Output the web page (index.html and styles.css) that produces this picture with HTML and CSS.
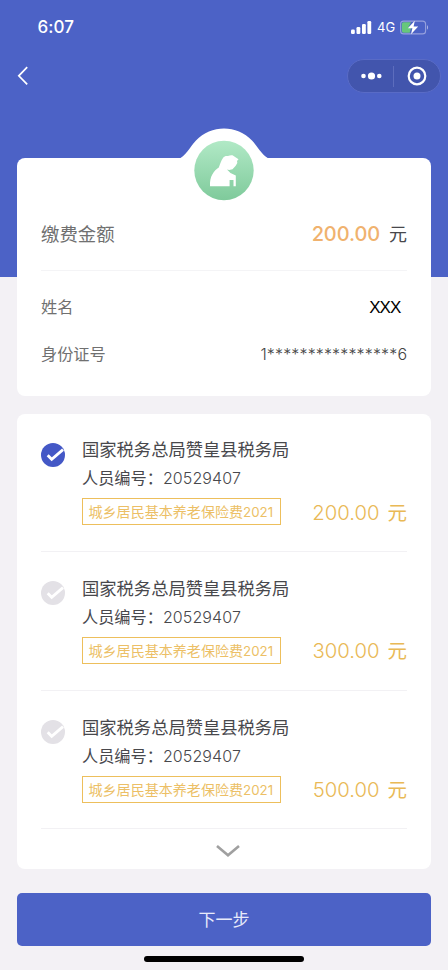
FILE: index.html
```html
<!DOCTYPE html>
<html lang="zh-CN">
<head>
<meta charset="utf-8">
<title>缴费</title>
<link rel="stylesheet" href="styles.css">
</head>
<body>
<div class="screen">
  <header class="hero">
    <div class="status">
      <span class="time">6:07</span>
      <div class="signals">
        <svg class="bars" width="21" height="13" viewBox="0 0 21 13" fill="#fff"><rect x="0" y="8.5" width="3.8" height="4.5" rx="1.2"/><rect x="5.5" y="6" width="3.8" height="7" rx="1.2"/><rect x="11" y="3" width="3.8" height="10" rx="1.2"/><rect x="16.4" y="0" width="3.8" height="13" rx="1.2"/></svg>
        <span class="network">4G</span>
        <svg class="battery" width="29" height="15" viewBox="0 0 29 15"><rect x=".6" y="1.1" width="25" height="12.8" rx="3" fill="none" stroke="#96a0dd" stroke-width="1.1"/><path d="M3.6 2.3H11L8 8h3l-1.3 4.8H3.6a1.8 1.8 0 0 1-1.8-1.8V4.1a1.8 1.8 0 0 1 1.8-1.8z" fill="#67c77b"/><path d="M27 5.3c1.4.5 1.4 3.9 0 4.4z" fill="#a9b1e3"/><path d="M14.8.8 7.8 8.2h4.6L11 14.2l7.2-7.6h-4.6z" fill="#fff"/></svg>
      </div>
    </div>
    <nav class="nav">
      <svg width="12" height="20" viewBox="0 0 12 20" fill="none" stroke="#fff" stroke-width="1.7"><path d="M10.2 1.2 1.8 9.8l8.4 8.6"/></svg>
      <div class="capsule">
        <svg width="21" height="8" viewBox="0 0 21 8" fill="#fff"><circle cx="2.5" cy="4" r="2.3"/><circle cx="10.5" cy="4" r="3.6"/><circle cx="18.3" cy="4" r="2.3"/></svg>
        <i class="split"></i>
        <svg width="20" height="20" viewBox="0 0 20 20"><circle cx="10" cy="10" r="8.3" fill="none" stroke="#fff" stroke-width="2.2"/><circle cx="10" cy="10" r="3.5" fill="#fff"/></svg>
      </div>
    </nav>
  </header>

  <main class="content">
    <section class="card summary">
      <svg class="emblem" width="92" height="76" viewBox="0 0 92 76">
        <defs><linearGradient id="mint" x1="0" y1="0" x2="0" y2="1"><stop offset="0" stop-color="#b1e9c6"/><stop offset="1" stop-color="#7fca9b"/></linearGradient></defs>
        <path d="M0 31C7 29 12 19 18 12.5C33-3.500 59-3.500 74 12.500C80 19 85 29 92 31Z" fill="#fff"/>
        <circle cx="46" cy="42.5" r="29.7" fill="url(#mint)"/>
        <path d="M32 58.2C31.8 53 32.6 49.5 34.3 46.5C36 43 38.5 41 40.8 39.5C42 36 43.2 32.5 45 30C46.5 27.6 48.5 27.8 50 28C51.5 27.2 53 27.2 54.5 27.3L60.5 31.3L59 33L59.3 35L57.7 37.7L54.5 41.2L51.2 42L49 41.5L52.5 45L57.8 47.5V58.2H55.5V52H51.6V58.2Z" fill="#fff"/>
      </svg>
      <div class="total"><span class="total-label">缴费金额</span><span><b class="total-sum">200.00</b><span class="total-unit">元</span></span></div>
      <div class="row"><span>姓名</span><span class="name">XXX</span></div>
      <div class="row"><span>身份证号</span><span class="idno">1<span class="stars">****************</span>6</span></div>
    </section>

    <section class="card list">
      <article class="item">
        <svg class="check on" width="26" height="26" viewBox="0 0 26 26"><circle cx="13" cy="13" r="12"/><path d="m7.7 13.2 4 4.1L23 7.6"/></svg>
        <div class="info"><h2>国家税务总局赞皇县税务局</h2><p>人员编号：<span class="num">20529407</span></p><div class="tag">城乡居民基本养老保险费<span>2021</span></div></div>
        <div class="price"><span>200.00</span>元</div>
      </article>
      <article class="item">
        <svg class="check" width="26" height="26" viewBox="0 0 26 26"><circle cx="13" cy="13" r="12"/><path d="m7.7 13.2 4 4.1L23 7.6"/></svg>
        <div class="info"><h2>国家税务总局赞皇县税务局</h2><p>人员编号：<span class="num">20529407</span></p><div class="tag">城乡居民基本养老保险费<span>2021</span></div></div>
        <div class="price"><span>300.00</span>元</div>
      </article>
      <article class="item">
        <svg class="check" width="26" height="26" viewBox="0 0 26 26"><circle cx="13" cy="13" r="12"/><path d="m7.7 13.2 4 4.1L23 7.6"/></svg>
        <div class="info"><h2>国家税务总局赞皇县税务局</h2><p>人员编号：<span class="num">20529407</span></p><div class="tag">城乡居民基本养老保险费<span>2021</span></div></div>
        <div class="price"><span>500.00</span>元</div>
      </article>
      <div class="more"><svg width="26" height="14" viewBox="0 0 26 14" fill="none" stroke="#a0a0a0" stroke-width="2.6"><path d="m2 2 11 9.3L24 2"/></svg></div>
    </section>

    <button class="next">下一步</button>
    <div class="home"></div>
  </main>
</div>
</body>
</html>
```
FILE: styles.css
```css
* { box-sizing: border-box; }
body { margin: 0; background: #f3f1f5; font-family: Inter, "Noto Sans CJK SC", sans-serif; color: #48484c; }
svg { display: block; flex: none; }
.screen { width: 448px; height: 970px; overflow: hidden; background: #f3f1f5; }
.hero { height: 277px; background: #4c62c6; color: #fff; }
.status { height: 54px; padding: 0 19px 0 37.5px; display: flex; justify-content: space-between; align-items: center; }
.time { font-size: 17px; font-weight: 500; letter-spacing: .1px; }
.signals { display: flex; align-items: center; }
.bars { margin-right: -1px; }
.network { font-size: 13px; margin: 0 5px 0 6px; width: 18px; }
.nav { height: 44px; padding: 0 7px 0 17px; display: flex; align-items: center; justify-content: space-between; }
.capsule { width: 94px; height: 34px; border: 1px solid #596bc6; border-radius: 17px; background: #4255ad; display: flex; align-items: center; padding: 0 13px; }
.split { width: 1px; height: 21px; background: #5d6dbd; margin: 0 13px 0 11px; flex: none; }
.content { margin-top: -119px; padding: 0 17px; display: flex; flex-direction: column; }
.card { background: #fff; border-radius: 8px; padding: 0 24px; }
.summary { position: relative; height: 238px; }
.emblem { position: absolute; left: 161px; top: -30px; }
.total { height: 113px; padding-top: 56px; display: flex; justify-content: space-between; border-bottom: 1px solid #f4f4f6; line-height: 40px; }
.total-label { font-size: 18.4px; color: #707070; }
.total-sum { font-size: 20px; font-weight: 500; color: #f0b26e; letter-spacing: -.1px; margin-right: 9px; }
.total-unit { font-size: 18px; }
.row { height: 47px; margin-top: 13px; display: flex; justify-content: space-between; line-height: 47px; font-size: 16.2px; color: #707070; }
.row + .row { margin-top: 0; }
.name { font-family: "Liberation Sans", sans-serif; font-size: 17px; color: #000; letter-spacing: -.9px; margin-right: 6.5px; }
.idno { font-size: 16px; font-weight: 350; color: #444; }
.stars { letter-spacing: .15px; }
.list { height: 455px; margin-top: 18px; }
.item { height: 138.5px; border-bottom: 1px solid #f2f1f4; display: flex; }
.item:first-child { height: 138px; }
.check { margin: 28px 16px 0 -1px; fill: #e3e1e6; stroke: #fff; }
.check circle { stroke: none; }
.check path { fill: none; stroke-width: 2.8; }
.check.on { fill: #4458c6; }
.info { padding-top: 22px; }
.item:first-child .info { padding-top: 21.4px; }
h2 { margin: 0; font-size: 17.3px; line-height: 29px; font-weight: 400; }
p { margin: 0; font-size: 16.2px; line-height: 29px; font-weight: 400; }
.num { font-size: 16px; font-weight: 350; letter-spacing: .1px; }
.tag { width: 199px; height: 27px; margin-top: 5px; border: 1.5px solid #edbf5c; color: #ecbf66; font-size: 14.05px; line-height: 25px; padding-left: 5.5px; white-space: nowrap; }
.item:first-child .tag { margin-top: 4.4px; }
.tag span { font-size: 13.3px; }
.price { margin-left: auto; padding-top: 84px; font-size: 19.5px; line-height: 30px; color: #e9b956; white-space: nowrap; }
.price span { font-size: 20.3px; margin-right: 8px; font-weight: 350; }
.more { height: 39px; padding-top: 15px; display: flex; justify-content: center; }
.more svg { margin-left: 8px; }
.next { height: 53px; margin-top: 24px; border: 0; border-radius: 5px; background: #4c62c6; color: #e8ebfa; font: 400 17px/54px Inter, "Noto Sans CJK SC", sans-serif; padding: 0; }
.home { width: 160px; height: 6px; border-radius: 3px; background: #000; margin: 10px auto 0; }
```
